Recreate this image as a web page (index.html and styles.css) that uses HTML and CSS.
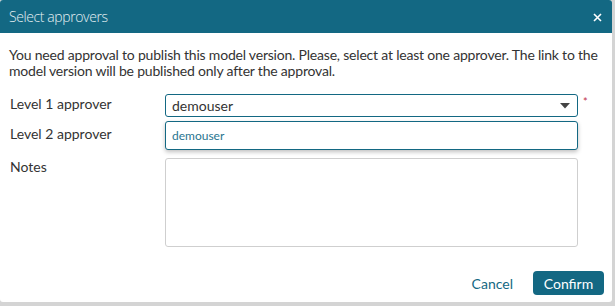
FILE: index.html
```html
<!DOCTYPE html>
<html>
<head>
<meta charset="utf-8">
<link rel="stylesheet" href="styles.css">
</head>
<body>
<div class="dialog">
  <div class="header">
    <span class="title">Select approvers</span>
    <svg class="close" width="9" height="9" viewBox="0 0 9 9"><path d="M1 1L8 8M8 1L1 8" stroke="#fff" stroke-width="1.6"/></svg>
  </div>
  <div class="body">
    <p class="intro">You need approval to publish this model version. Please, select at least one approver. The link to the model version will be published only after the approval.</p>
    <div class="form">
      <div class="label l1">Level 1 approver</div>
      <div class="field">
        <div class="select">
          <span>demouser</span>
          <svg class="caret" width="10" height="6" viewBox="0 0 10 6"><path d="M0 0H10L5 5.5Z" fill="#444"/></svg>
        </div>
        <span class="req">*</span>
        <div class="menu"><div class="opt">demouser</div></div>
      </div>
      <div class="label l2">Level 2 approver</div>
      <div class="field spacer"></div>
      <div class="label l3">Notes</div>
      <div class="field"><div class="notes"></div></div>
    </div>
  </div>
  <div class="footer">
    <button class="cancel">Cancel</button>
    <button class="confirm">Confirm</button>
  </div>
</div>
</body>
</html>
```
FILE: styles.css
```css
html, body { margin: 0; padding: 0; }
body {
  background: #d4d4d4;
  width: 615px;
  height: 306px;
  overflow: hidden;
  font-family: "Lato", "Noto Sans", sans-serif;
  color: #333;
}
.dialog {
  width: 612px;
  height: 302px;
  background: #fff;
  border-radius: 3px;
  overflow: hidden;
  display: flex;
  flex-direction: column;
}
.header {
  height: 33px;
  background: #136883;
  display: flex;
  align-items: center;
  justify-content: space-between;
  padding: 0 10px 0 9px;
  box-sizing: border-box;
}
.title {
  color: #e6f0f3;
  font-family: "Open Sans", sans-serif;
  font-weight: 300;
  font-size: 14px;
  letter-spacing: -0.4px;
}
.close { margin-top: 1px; }
.body { padding: 0 9px; flex: 1; }
.intro {
  margin: 14px 0 0;
  font-size: 14px;
  line-height: 16px;
  letter-spacing: -0.2px;
  color: #333;
}
.form {
  margin-top: 15px;
  display: grid;
  grid-template-columns: 156px 413px;
}
.label { font-size: 14px; line-height: 18px; color: #333; padding-left: 1px; }
.l1 { padding-top: 1px; height: 27px; box-sizing: border-box; }
.l2 { height: 37px; padding-top: 4px; box-sizing: border-box; }
.l3 { padding-top: 0; }
.field { position: relative; }
.select {
  height: 23px;
  box-sizing: border-box;
  border: 1px solid #136883;
  border-radius: 3px;
  display: flex;
  align-items: center;
  justify-content: space-between;
  padding: 0 7px 0 6px;
  font-size: 14px;
  color: #333;
}
.caret { margin-top: 1px; }
.req {
  position: absolute;
  left: 418px;
  top: 1px;
  color: #c0304a;
  font-size: 11px;
}
.menu {
  position: absolute;
  left: 0;
  top: 27px;
  width: 413px;
  height: 29px;
  box-sizing: border-box;
  border: 1px solid #136883;
  border-radius: 3px;
  background: #fff;
  box-shadow: 0 2px 4px rgba(0,0,0,0.25);
  display: flex;
  align-items: center;
  z-index: 2;
}
.opt { font-size: 12px; color: #2a7590; padding-left: 6px; }
.spacer { height: 37px; }
.notes {
  height: 89px;
  box-sizing: border-box;
  border: 1px solid #cfcfcf;
  border-radius: 3px;
}
.footer {
  height: 55px;
  display: flex;
  justify-content: flex-end;
  align-items: flex-end;
  padding: 0 8px 7px 0;
  box-sizing: border-box;
  gap: 20px;
}
button { font-family: inherit; font-size: 14px; border: none; cursor: pointer; }
.cancel { background: none; color: #136883; padding: 0; height: 24px; }
.confirm {
  background: #136883;
  color: #fff;
  border-radius: 4px;
  width: 71px;
  height: 24px;
}
```
